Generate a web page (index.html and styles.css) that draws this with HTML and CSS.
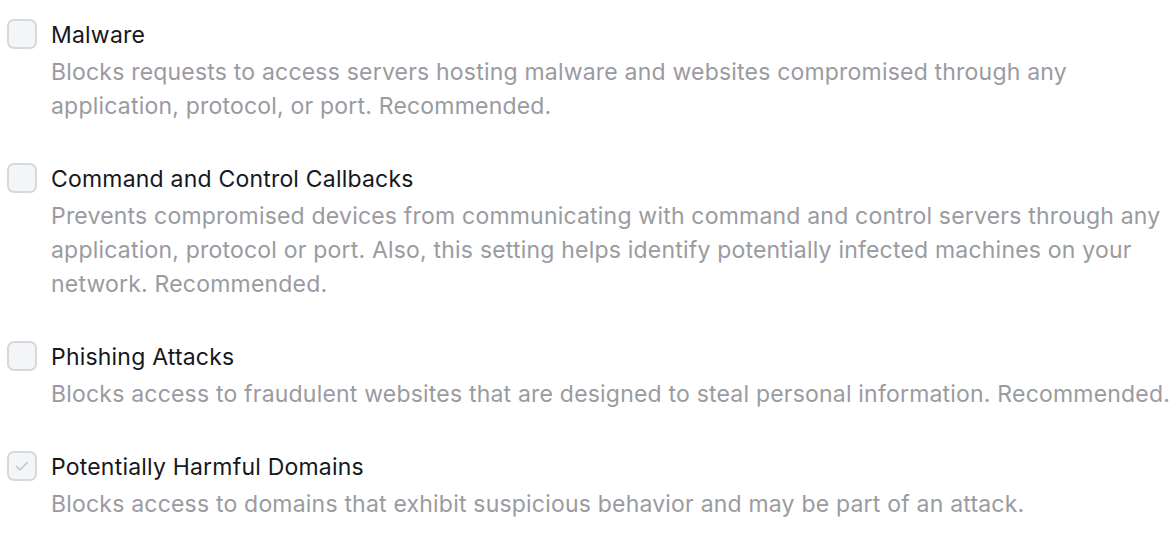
FILE: index.html
```html
<!DOCTYPE html>
<html lang="en-US">
    <head>
        <title>Security Categories</title>
        <meta name="viewport" content="width=device-width, initial-scale=1.0">
        <link rel="stylesheet" href="styles.css">
    </head>
    <body>
        <ul class="options">
            <li class="option">
                <span class="box"></span>
                <div class="text">
                    <h3 class="title">Malware</h3>
                    <p class="desc">Blocks requests to access servers hosting malware and websites compromised through any application, protocol, or port. Recommended.</p>
                </div>
            </li>
            <li class="option">
                <span class="box"></span>
                <div class="text">
                    <h3 class="title">Command and Control Callbacks</h3>
                    <p class="desc">Prevents compromised devices from communicating with command and control servers through any application, protocol or port. Also, this setting helps identify potentially infected machines on your network. Recommended.</p>
                </div>
            </li>
            <li class="option">
                <span class="box"></span>
                <div class="text">
                    <h3 class="title">Phishing Attacks</h3>
                    <p class="desc">Blocks access to fraudulent websites that are designed to steal personal information. Recommended.</p>
                </div>
            </li>
            <li class="option">
                <span class="box checked">
                    <svg viewBox="0 0 20 20" width="20" height="20"><path d="M4.5 10.5l3.6 3.3 7.2-7.3" fill="none" stroke="#c2c6cd" stroke-width="1.6" stroke-linecap="round" stroke-linejoin="round"/></svg>
                </span>
                <div class="text">
                    <h3 class="title">Potentially Harmful Domains</h3>
                    <p class="desc">Blocks access to domains that exhibit suspicious behavior and may be part of an attack.</p>
                </div>
            </li>
        </ul>
    </body>
</html>
```

FILE: styles.css
```css
* {
    box-sizing: border-box;
    margin: 0;
    padding: 0;
}

html {
    background: #fff;
    font-family: Inter, "Noto Sans", sans-serif;
}

body {
    padding: 18px 0 0 7px;
}

.options {
    list-style: none;
    display: flex;
    flex-direction: column;
    gap: 39px;
}

.option {
    display: flex;
    gap: 14px;
}

.box {
    flex: none;
    width: 30px;
    height: 30px;
    margin-top: 1px;
    border: 2.5px solid #d5d8dd;
    border-radius: 7px;
    background: #f4f5f7;
    display: flex;
    align-items: center;
    justify-content: center;
}

.title {
    font-size: 23px;
    font-weight: 400;
    line-height: 34px;
    letter-spacing: 0.2px;
    color: #16181d;
}

.desc {
    margin-top: 3px;
    font-size: 23px;
    line-height: 34px;
    letter-spacing: 0.2px;
    color: #9a9ba1;
}
```
